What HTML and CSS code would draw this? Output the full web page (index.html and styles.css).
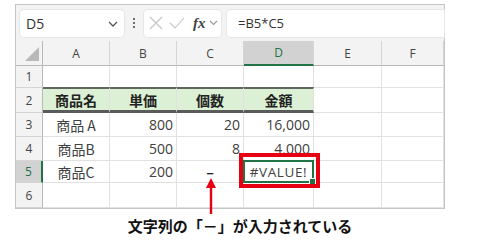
FILE: index.html
```html
<!DOCTYPE html>
<html lang="ja">
<head>
<meta charset="utf-8">
<link rel="stylesheet" href="styles.css">
</head>
<body>
<div class="page">
  <div class="frame">
    <div class="toolbar">
      <div class="namebox"><span class="nb-text">D5</span>
        <svg class="chev" width="10" height="6" viewBox="0 0 10 6"><path d="M1 1 L5 5 L9 1" fill="none" stroke="#555" stroke-width="1.3"/></svg>
      </div>
      <div class="dots"><span></span><span></span><span></span></div>
      <div class="fbtns">
        <svg width="14" height="14" viewBox="0 0 14 14"><path d="M1 1 L13 13 M13 1 L1 13" stroke="#c4c4c4" stroke-width="1.1"/></svg>
        <svg width="16" height="14" viewBox="0 0 16 14"><path d="M1 7 L6 12 L15 2" fill="none" stroke="#c4c4c4" stroke-width="1.1"/></svg>
        <span class="fx">fx</span>
        <svg width="9" height="6" viewBox="0 0 9 6"><path d="M1 1 L4.5 4.5 L8 1" fill="none" stroke="#999" stroke-width="1.1"/></svg>
      </div>
      <div class="finput">=B5*C5</div>
    </div>
    <div class="grid">
      <div class="corner"><span class="tri"></span></div>
      <div class="ch">A</div><div class="ch">B</div><div class="ch">C</div><div class="ch ch-sel">D</div><div class="ch">E</div><div class="ch">F</div>

      <div class="rh r1">1</div><div class="c"></div><div class="c"></div><div class="c"></div><div class="c"></div><div class="c"></div><div class="c"></div>

      <div class="rh r2">2</div><div class="c hd">商品名</div><div class="c hd">単価</div><div class="c hd">個数</div><div class="c hd">金額</div><div class="c"></div><div class="c"></div>

      <div class="rh r3">3</div><div class="c ctr">商品 A</div><div class="c num">800</div><div class="c num">20</div><div class="c num">16,000</div><div class="c"></div><div class="c"></div>

      <div class="rh r4">4</div><div class="c ctr">商品B</div><div class="c num">500</div><div class="c num">8</div><div class="c num">4,000</div><div class="c"></div><div class="c"></div>

      <div class="rh r5 rh-sel">5</div><div class="c ctr">商品C</div><div class="c num">200</div><div class="c ctr dash">–</div><div class="c ctr sel">#VALUE!<span class="handle"></span></div><div class="c"></div><div class="c"></div>

      <div class="rh r6">6</div><div class="c"></div><div class="c"></div><div class="c"></div><div class="c"></div><div class="c"></div><div class="c"></div>
    </div>
  </div>
  <div class="redbox"></div>
  <svg class="arrow" width="14" height="36" viewBox="0 0 14 36"><path d="M7 0 L12 10 L2 10 Z" fill="#e60012"/><rect x="5.8" y="8" width="2.4" height="28" fill="#e60012"/></svg>
  <div class="caption">文字列の「－」が入力されている</div>
</div>
</body>
</html>
```

FILE: styles.css
```css
html, body {
  margin: 0;
  padding: 0;
  background: #ffffff;
}
body {
  width: 480px;
  height: 247px;
  overflow: hidden;
  font-family: "Noto Sans CJK JP", "Noto Sans", sans-serif;
}
.page {
  position: relative;
  width: 480px;
  height: 247px;
  padding-top: 4px;
  box-sizing: border-box;
}
.frame {
  margin-left: 15px;
  width: 430px;
  height: 205px;
  box-sizing: border-box;
  border: 1px solid #c4c4c4;
  background: #f3f3f3;
}
.toolbar {
  height: 36px;
  display: flex;
  align-items: center;
  padding-left: 4px;
  box-sizing: border-box;
}
.namebox {
  width: 104px;
  height: 27px;
  background: #fff;
  border-radius: 4px;
  box-shadow: 0 0 0 1px #e6e6e6;
  display: flex;
  align-items: center;
  justify-content: space-between;
  padding: 0 6px 0 6px;
  box-sizing: border-box;
}
.nb-text {
  font-family: "Open Sans", "Noto Sans", sans-serif;
  font-size: 14px;
  color: #333;
}
.chev { margin-top: 2px; }
.dots {
  width: 20px;
  height: 27px;
  display: flex;
  flex-direction: column;
  align-items: center;
  justify-content: center;
  gap: 2px;
}
.dots span {
  width: 2px;
  height: 2px;
  background: #444;
  border-radius: 1px;
}
.fbtns {
  width: 77px;
  height: 27px;
  background: #fff;
  border-radius: 4px;
  box-shadow: 0 0 0 1px #e6e6e6;
  display: flex;
  align-items: center;
  padding-left: 5px;
  gap: 6px;
  box-sizing: border-box;
}
.fx {
  font-family: "Liberation Serif", serif;
  font-style: italic;
  font-weight: bold;
  font-size: 15px;
  color: #444;
  margin-left: 2px;
  margin-right: -3px;
}
.finput {
  flex: 1;
  height: 27px;
  margin-left: 6px;
  background: #fff;
  border-radius: 4px 0 0 4px;
  box-shadow: 0 0 0 1px #e6e6e6;
  display: flex;
  align-items: center;
  padding-left: 11px;
  font-family: "Open Sans", "Noto Sans", sans-serif;
  font-size: 13px;
  color: #333;
}
.grid {
  display: grid;
  grid-template-columns: 27px 67px 67px 67px 70px 68px 62px;
  grid-template-rows: 25px 22px 25px 24px 24px 22px 25px;
  background: #fff;
}
.grid > div {
  box-sizing: border-box;
}
.corner {
  background: #f3f3f3;
  border-right: 1px solid #b8b8b8;
  border-bottom: 1px solid #b8b8b8;
  position: relative;
}
.tri {
  position: absolute;
  right: 3px;
  bottom: 4px;
  width: 0;
  height: 0;
  border-left: 14px solid transparent;
  border-bottom: 14px solid #b9b9b9;
}
.ch {
  background: #f3f3f3;
  border-right: 1px solid #d5d5d5;
  border-bottom: 1px solid #b8b8b8;
  display: flex;
  align-items: center;
  justify-content: center;
  font-family: "Open Sans", "Noto Sans", sans-serif;
  font-size: 12px;
  color: #444;
}
.ch-sel {
  background: #d2d2d2;
  border-bottom: 2px solid #217346;
  color: #217346;
}
.rh {
  background: #f3f3f3;
  border-right: 1px solid #b8b8b8;
  border-bottom: 1px solid #d5d5d5;
  display: flex;
  align-items: center;
  justify-content: center;
  font-family: "Open Sans", "Noto Sans", sans-serif;
  font-size: 12px;
  color: #444;
}
.rh-sel {
  background: #d2d2d2;
  border-right: 2px solid #217346;
  color: #217346;
}
.c {
  border-right: 1px solid #e1e1e1;
  border-bottom: 1px solid #e1e1e1;
  display: flex;
  align-items: center;
  font-size: 14px;
  color: #404040;
  padding: 0 3px;
  white-space: nowrap;
}
.hd {
  background: #dbf0d4;
  border-top: 2px solid #5e665e;
  border-bottom: 3px solid #5b5b5b;
  margin-top: -1px;
  justify-content: center;
  font-weight: bold;
  color: #222;
  font-size: 14px;
}
.ctr { justify-content: center; }
.num {
  justify-content: flex-end;
  font-family: "Open Sans", "Noto Sans", sans-serif;
  font-size: 14px;
  color: #404040;
}
.dash {
  font-weight: bold;
  color: #222;
}
.sel {
  position: relative;
  border: 2px solid #217346;
  margin: -1px 0 0 -1px;
  font-family: "Open Sans", "Noto Sans", sans-serif;
  font-size: 13.5px;
  letter-spacing: 0.6px;
  color: #404040;
}
.handle {
  position: absolute;
  right: -4px;
  bottom: -4px;
  width: 5px;
  height: 5px;
  background: #217346;
  border: 1px solid #fff;
}
.redbox {
  position: absolute;
  left: 239px;
  top: 153px;
  width: 81px;
  height: 35px;
  box-sizing: border-box;
  border: 4px solid #e60012;
}
.arrow {
  position: absolute;
  left: 204px;
  top: 178px;
}
.caption {
  text-align: center;
  margin-top: 6px;
  font-weight: bold;
  font-size: 15px;
  color: #111;
}
```
